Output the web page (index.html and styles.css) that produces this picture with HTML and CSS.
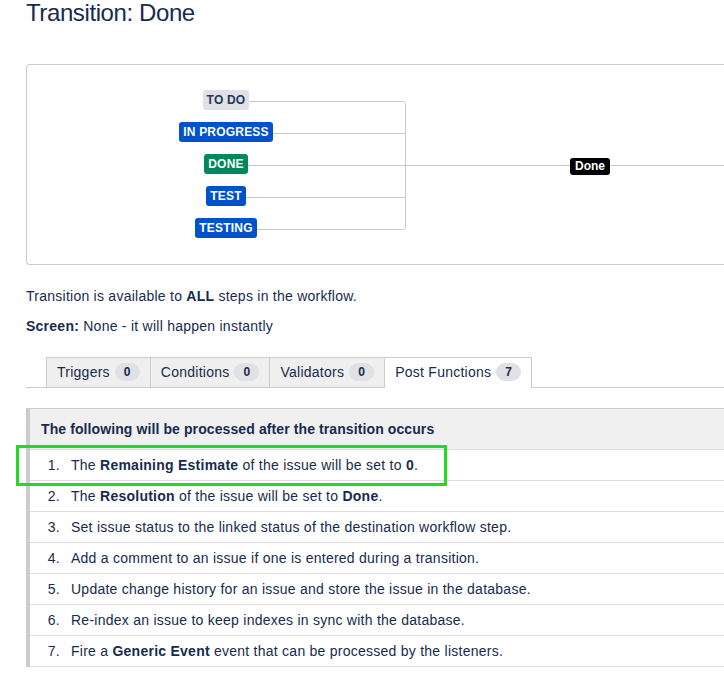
FILE: index.html
```html
<!DOCTYPE html>
<html lang="en">
<head>
    <meta charset="UTF-8">
    <meta name="viewport" content="width=device-width, initial-scale=1.0">
    <title>Transition: Done</title>
    <link rel="stylesheet" href="styles.css">
</head>
<body>
    <div class="page">
        <h1 class="title">Transition: Done</h1>

        <div class="diagram">
            <svg class="links" width="760" height="199">
                <path d="M199 36.5 H375.5 Q378.5 36.5 378.5 39.5 V161.5 Q378.5 164.5 375.5 164.5 H199" fill="none" stroke="#c8c8c8"/>
                <path d="M199 68.5 H378.5 M199 132.5 H378.5 M199 100.5 H760" fill="none" stroke="#c8c8c8"/>
            </svg>
            <div class="states">
                <span class="lozenge todo">To Do</span>
                <span class="lozenge progress">In Progress</span>
                <span class="lozenge done">Done</span>
                <span class="lozenge progress">Test</span>
                <span class="lozenge progress">Testing</span>
            </div>
            <span class="edge_label">Done</span>
        </div>

        <p class="note">Transition is available to <b>ALL</b> steps in the workflow.</p>
        <p class="note second"><b>Screen:</b> None - it will happen instantly</p>

        <div class="tabs">
            <div class="tab">Triggers <span class="badge">0</span></div>
            <div class="tab">Conditions <span class="badge">0</span></div>
            <div class="tab">Validators <span class="badge">0</span></div>
            <div class="tab active">Post Functions <span class="badge">7</span></div>
        </div>

        <div class="panel">
            <div class="panel_head">The following will be processed after the transition occurs</div>
            <ol class="steps">
                <li>The <b>Remaining Estimate</b> of the issue will be set to <b>0</b>.</li>
                <li>The <b>Resolution</b> of the issue will be set to <b>Done</b>.</li>
                <li>Set issue status to the linked status of the destination workflow step.</li>
                <li>Add a comment to an issue if one is entered during a transition.</li>
                <li>Update change history for an issue and store the issue in the database.</li>
                <li>Re-index an issue to keep indexes in sync with the database.</li>
                <li>Fire a <b>Generic Event</b> event that can be processed by the listeners.</li>
            </ol>
        </div>

        <div class="callout"></div>
    </div>
</body>
</html>
```

FILE: styles.css
```css
html, body {
    overflow: hidden;
}
body {
    margin: 0;
    font-family: "Liberation Sans", Arial, sans-serif;
    font-size: 14px;
    letter-spacing: 0.25px;
    color: #172b4d;
}
.page {
    position: relative;
    width: 760px;
    padding-left: 26px;
}
.title {
    margin: 0 0 38px;
    font-size: 24px;
    line-height: 26px;
    font-weight: normal;
    letter-spacing: -0.4px;
}
.diagram {
    position: relative;
    height: 199px;
    border: 1px solid #cccccc;
    border-right: none;
    border-radius: 4px 0 0 4px;
}
.links {
    position: absolute;
    top: 0;
    left: 0;
}
.states {
    position: relative;
    width: 398px;
    padding-top: 25px;
    display: flex;
    flex-direction: column;
    align-items: center;
    gap: 12px;
}
.lozenge {
    height: 20px;
    line-height: 20px;
    padding: 0 4px;
    border-radius: 3px;
    font-size: 12px;
    font-weight: bold;
    letter-spacing: 0.2px;
    text-transform: uppercase;
    color: white;
}
.todo {
    background: #dfe1e6;
    color: #253858;
}
.progress {
    background: #0052cc;
}
.done {
    background: #00875a;
}
.edge_label {
    position: absolute;
    left: 543px;
    top: 93px;
    padding: 0 5px;
    line-height: 17px;
    border-radius: 3px;
    background: black;
    color: white;
    font-size: 12px;
    font-weight: bold;
    letter-spacing: 0;
}
.note {
    margin: 21px 0 0;
    line-height: 20px;
}
.note.second {
    margin-top: 10px;
}
.tabs {
    margin-top: 21px;
    padding-left: 20px;
    display: flex;
    border-bottom: 1px solid #cccccc;
}
.tab {
    height: 30px;
    box-sizing: border-box;
    padding: 0 10px 1px;
    display: flex;
    align-items: center;
    gap: 5px;
    background: #efefef;
    border: 1px solid #cccccc;
    border-bottom: none;
    margin-left: -1px;
}
.tab:first-child {
    margin-left: 0;
}
.tab.active {
    background: white;
    height: 31px;
    padding-bottom: 2px;
    margin-bottom: -1px;
}
.badge {
    min-width: 25px;
    box-sizing: border-box;
    padding: 0 6px;
    height: 18px;
    line-height: 18px;
    border-radius: 9px;
    background: #dfe1e6;
    font-size: 12px;
    font-weight: bold;
    text-align: center;
}
.panel {
    margin-top: 20px;
    border-top: 1px solid #cccccc;
    border-left: 4px solid #cccccc;
}
.panel_head {
    padding: 10px 11px;
    line-height: 20px;
    background: #f0f0f0;
    font-weight: bold;
    letter-spacing: 0.1px;
}
.steps {
    margin: 0;
    padding: 0;
    list-style: none;
    counter-reset: step;
}
.steps li {
    counter-increment: step;
    padding: 5px 0;
    line-height: 20px;
    border-top: 1px solid #dddddd;
}
.steps li:last-child {
    border-bottom: 1px solid #dddddd;
}
.steps li::before {
    content: counter(step) ".";
    display: inline-block;
    width: 30px;
    margin-right: 11px;
    text-align: right;
}
.callout {
    position: absolute;
    left: 16px;
    top: 445px;
    width: 425px;
    height: 35px;
    border: 3px solid #1edc1e;
}
```
